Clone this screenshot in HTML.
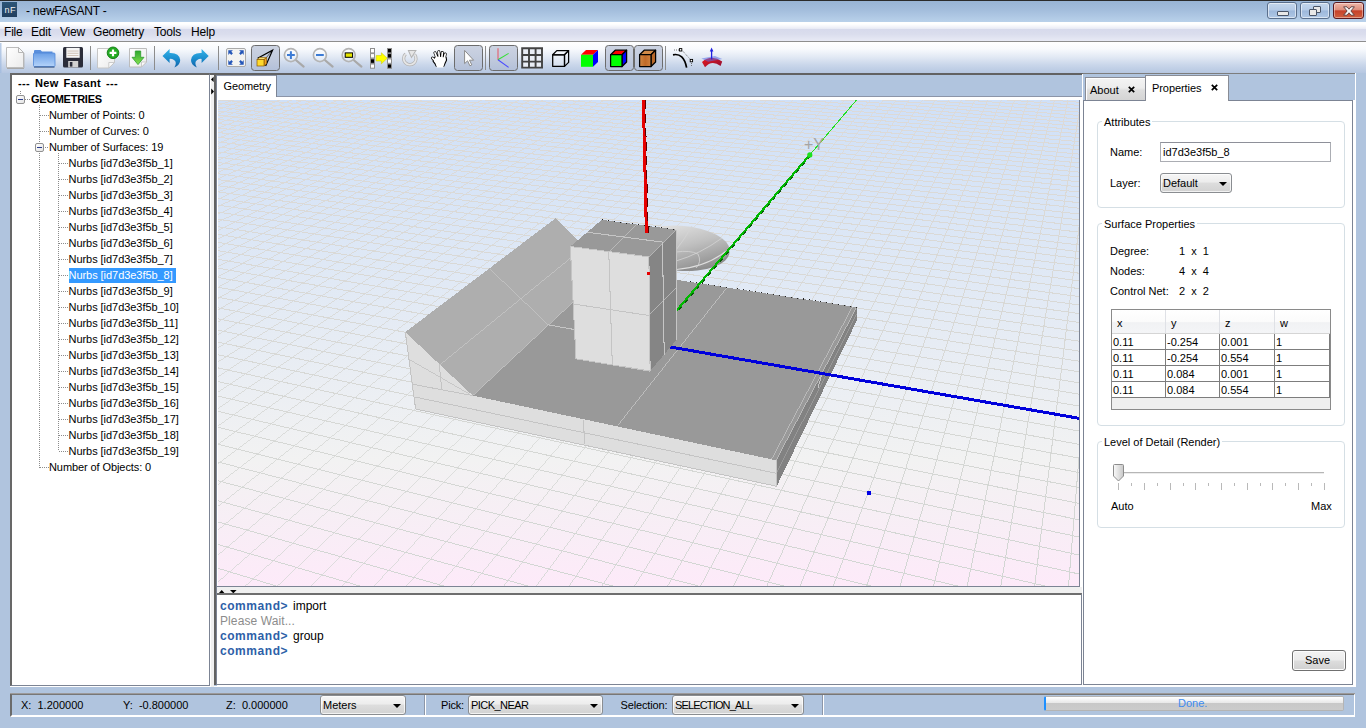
<!DOCTYPE html>
<html><head><meta charset="utf-8"><title>- newFASANT -</title>
<style>
html,body{margin:0;padding:0}
body{width:1366px;height:728px;overflow:hidden;background:#b0c4de;position:relative;font-family:"Liberation Sans",sans-serif;font-size:11px;color:#000}
.a{position:absolute}
.t{position:absolute;white-space:pre;line-height:13px;height:13px;margin-top:1px}
.b{font-weight:bold}
.combo{position:absolute;box-sizing:border-box;border:1px solid #8a8d91;border-radius:3px;background:linear-gradient(#f6f6f6,#ececec 45%,#dddddd 50%,#d2d2d2);box-shadow:inset 0 0 0 1px rgba(255,255,255,.7)}
.combo i{position:absolute;right:4px;top:8px;width:0;height:0;border-left:4px solid transparent;border-right:4px solid transparent;border-top:4px solid #000}
.combo span{position:absolute;left:2px;top:3px;line-height:13px;white-space:pre}
.grp{position:absolute;box-sizing:border-box;border:1px solid #d5dfe5;border-radius:4px}
.grp b{position:absolute;top:-6px;left:4px;background:#fff;padding:0 2px;font-weight:normal;line-height:13px;white-space:pre}
</style></head>
<body>
<!-- title bar -->
<div class="a" style="left:0;top:0;width:1366px;height:22px;background:linear-gradient(#97b3d4,#a3bddc 45%,#b9d1ea 100%)"></div>
<div class="a" style="left:0;top:0;width:1366px;height:1px;background:#2b2b2b"></div>
<div class="a" style="left:2px;top:2px;width:15px;height:15px;background:linear-gradient(#2d5578,#223f5e)"><span class="a" style="left:2.5px;top:3px;font-size:9px;line-height:10px;color:#f2f2f2;letter-spacing:0.4px">nF</span></div>
<span class="t" style="left:26px;top:3px;font-size:12px;line-height:14px;height:14px;letter-spacing:-0.2px">- newFASANT -</span>
<!-- window buttons -->
<div class="a" style="left:1267px;top:2px;width:30px;height:17px;box-sizing:border-box;border:1px solid #5a6f8c;border-radius:3px;background:linear-gradient(#c4d6ec,#b4cae6 48%,#9db8db 52%,#b0c8e6);box-shadow:inset 0 0 0 1px rgba(255,255,255,.55)"><div class="a" style="left:9px;top:8px;width:10px;height:3px;background:#e8e8e8;border:1px solid #4a5568;border-radius:1px"></div></div>
<div class="a" style="left:1300px;top:2px;width:30px;height:17px;box-sizing:border-box;border:1px solid #5a6f8c;border-radius:3px;background:linear-gradient(#c4d6ec,#b4cae6 48%,#9db8db 52%,#b0c8e6);box-shadow:inset 0 0 0 1px rgba(255,255,255,.55)">
<div class="a" style="left:12px;top:3px;width:6px;height:5px;border:1.5px solid #4a5568;background:#e8e8e8;border-radius:1px"></div>
<div class="a" style="left:8px;top:6px;width:6px;height:5px;border:1.5px solid #4a5568;background:#e8e8e8;border-radius:1px"></div></div>
<div class="a" style="left:1333px;top:2px;width:31px;height:17px;box-sizing:border-box;border:1px solid #5b1a20;border-radius:3px;background:linear-gradient(#eeb6a8,#dd8e7c 46%,#c6412a 52%,#d0603f);box-shadow:inset 0 0 0 1px rgba(255,255,255,.4)"><svg class="a" style="left:9px;top:3px" width="12" height="10" viewBox="0 0 12 10"><path d="M0.6 0.8 L4 0.8 L6 3.2 L8 0.8 L11.4 0.8 L7.9 5 L11.4 9.2 L8 9.2 L6 6.8 L4 9.2 L0.6 9.2 L4.1 5 Z" fill="#f6f6f6" stroke="#5a3a3a" stroke-width="0.9"/></svg></div>
<!-- menu bar -->
<div class="a" style="left:0;top:22px;width:1366px;height:19px;background:linear-gradient(#ffffff 0,#ffffff 2px,#f2f3f9 5px,#e7e9f4 7px,#d7daec 7px,#dadded 12px,#e8eaf5 19px)"></div>
<div class="a" style="left:0;top:41px;width:1366px;height:1px;background:#8e8e8e"></div>
<span class="t" style="left:4px;top:24px;font-size:12px;line-height:14px;height:14px;letter-spacing:-0.2px">File</span>
<span class="t" style="left:31px;top:24px;font-size:12px;line-height:14px;height:14px;letter-spacing:-0.2px">Edit</span>
<span class="t" style="left:60px;top:24px;font-size:12px;line-height:14px;height:14px;letter-spacing:-0.2px">View</span>
<span class="t" style="left:93px;top:24px;font-size:12px;line-height:14px;height:14px;letter-spacing:-0.2px">Geometry</span>
<span class="t" style="left:154px;top:24px;font-size:12px;line-height:14px;height:14px;letter-spacing:-0.2px">Tools</span>
<span class="t" style="left:191px;top:24px;font-size:12px;line-height:14px;height:14px;letter-spacing:-0.2px">Help</span>
<!-- toolbar bg -->
<div class="a" style="left:0;top:42px;width:1366px;height:31px;background:linear-gradient(#ffffff 0,#f8fafd 7px,#e2e9f4 15px,#c9d6ea 23px,#b6c7e1 31px)"></div>
<div class="a" style="left:0;top:43px;width:2px;height:30px;background:linear-gradient(90deg,rgba(160,186,222,.9),rgba(160,186,222,.2))"></div>
<!-- main bevel -->
<div class="a" style="left:10px;top:73px;width:1345px;height:1px;background:#676767"></div>
<div class="a" style="left:1355px;top:73px;width:1px;height:614px;background:#fff"></div>
<!-- toolbar icons -->
<svg class="a" style="left:0;top:42px" width="740" height="31" viewBox="0 42 740 31">
<defs>
<linearGradient id="gdoc" x1="0" y1="0" x2="1" y2="1"><stop offset="0" stop-color="#ffffff"/><stop offset="1" stop-color="#ebebeb"/></linearGradient>
<linearGradient id="gfold" x1="0" y1="0" x2="0" y2="1"><stop offset="0" stop-color="#6a9fe6"/><stop offset="1" stop-color="#b4d3fa"/></linearGradient>
<linearGradient id="gblue" x1="0" y1="0" x2="0" y2="1"><stop offset="0" stop-color="#35b4e8"/><stop offset="0.5" stop-color="#1c8fd0"/><stop offset="1" stop-color="#0f62a8"/></linearGradient>
<linearGradient id="ggreen" x1="0" y1="0" x2="0" y2="1"><stop offset="0" stop-color="#2fa82f"/><stop offset="1" stop-color="#86e24e"/></linearGradient>
<linearGradient id="gbtn" x1="0" y1="0" x2="0" y2="1"><stop offset="0" stop-color="#ccd3e2"/><stop offset="0.5" stop-color="#c2cbdd"/><stop offset="1" stop-color="#b3c0d9"/></linearGradient>
<linearGradient id="glens" x1="0" y1="0" x2="0" y2="1"><stop offset="0" stop-color="#ffffff"/><stop offset="1" stop-color="#dfe9f6"/></linearGradient>
<linearGradient id="gwood" x1="0" y1="0" x2="1" y2="0"><stop offset="0" stop-color="#d08845"/><stop offset="0.5" stop-color="#c06a28"/><stop offset="1" stop-color="#cf8240"/></linearGradient>
<linearGradient id="gred" x1="0" y1="0" x2="1" y2="1"><stop offset="0" stop-color="#f01818"/><stop offset="1" stop-color="#8a1038"/></linearGradient>
</defs>
<!-- separators -->
<g fill="#8c8c8c"><rect x="90" y="46" width="1" height="24"/><rect x="154" y="46" width="1" height="24"/><rect x="218" y="46" width="1" height="24"/><rect x="485" y="46" width="1" height="24"/><rect x="665" y="46" width="1" height="24"/></g>
<!-- selected button backgrounds -->
<g fill="url(#gbtn)" stroke="#6c6c6c" stroke-width="1"><rect x="251.5" y="45.5" width="28" height="25" rx="3"/><rect x="454.5" y="45.5" width="28" height="25" rx="3"/><rect x="489.5" y="45.5" width="28" height="25" rx="3"/><rect x="605.5" y="45.5" width="28" height="25" rx="3"/><rect x="634.5" y="45.5" width="28" height="25" rx="3"/></g>
<!-- 1 new -->
<path d="M6.5 47.5 H18.5 L23.5 52.5 V67.5 H6.5 Z" fill="url(#gdoc)" stroke="#bcbcbc"/><path d="M18.5 47.5 V52.5 H23.5 Z" fill="#f8f8f8" stroke="#b0b0b0" stroke-width=".9"/><rect x="7" y="68" width="17" height="1" fill="#a8a8a8"/><rect x="23.6" y="53" width=".8" height="15" fill="#b0b0b0"/>
<!-- 2 open -->
<path d="M34 54 V51 Q34 50 35 50 H40.5 L42 51.5 H52.5 V54 Z" fill="#5a8fdc"/><rect x="33.5" y="53" width="21.5" height="13.5" rx="1" fill="url(#gfold)" stroke="#5088d8" stroke-width=".8"/><rect x="34" y="66.6" width="20.5" height="1" fill="#34527e"/>
<!-- 3 save -->
<rect x="63" y="47" width="20" height="20.6" rx="1.5" fill="#2b2d3a"/><rect x="66.3" y="47.8" width="13.4" height="10" fill="#f6f6f6"/><g fill="#cdbfb2"><rect x="67.5" y="50.6" width="11" height=".9"/><rect x="67.5" y="52.8" width="11" height=".9"/><rect x="67.5" y="55" width="11" height=".9"/></g><rect x="68.2" y="61" width="10" height="6.4" fill="#d2d2d2"/><rect x="69.8" y="62" width="2.6" height="4.6" fill="#2b2d3a"/>
<!-- 4 new+ -->
<path d="M97.5 48.5 H114.5 V62.5 L108.5 68 H97.5 Z" fill="url(#gdoc)" stroke="#c6c6c6"/><path d="M114.5 62.5 H108.8 V68 Z" fill="#fafafa" stroke="#c0c0c0" stroke-width=".8"/>
<circle cx="113" cy="52.8" r="5.8" fill="#22aa22" stroke="#107a10" stroke-width=".9"/><path d="M113 49.4 V56.2 M109.6 52.8 H116.4" stroke="#fff" stroke-width="2.2"/>
<!-- 5 download -->
<path d="M129.5 48.5 H146.5 V62 L141.5 67 H129.5 Z" fill="url(#gdoc)" stroke="#bcbcbc"/><path d="M146.5 62 H141.5 V67 Z" fill="#fafafa" stroke="#c0c0c0" stroke-width=".8"/>
<path d="M135.3 51 H140.7 V57.3 H144 L138 64.6 L132 57.3 H135.3 Z" fill="url(#ggreen)" stroke="#2f9d2f" stroke-width=".8"/>
<!-- 6 undo / 7 redo -->
<path id="undo" d="M162.5 56 L169.6 49 V53 Q179.4 52.6 180.2 60 Q180.4 64.6 174.4 67.6 Q177.4 62.4 174 60 Q172 58.7 169.6 58.9 V63 Z" fill="url(#gblue)"/>
<use href="#undo" transform="translate(371.2 0) scale(-1 1)"/>
<!-- 8 fit -->
<rect x="226.5" y="48.5" width="19" height="18" rx="1.5" fill="#f3f3f1" stroke="#a9a9a9"/>
<g fill="#2456b8"><path d="M228.3 50.3 h4.6 l-1.6 1.4 l1.6 1.6 l-1.6 1.6 l-1.6 -1.6 l-1.4 1.6 Z"/><path d="M243.7 50.3 v4.6 l-1.4 -1.6 l-1.6 1.6 l-1.6 -1.6 l1.6 -1.6 l-1.6 -1.4 Z"/><path d="M228.3 64.7 v-4.6 l1.4 1.6 l1.6 -1.6 l1.6 1.6 l-1.6 1.6 l1.6 1.4 Z"/><path d="M243.7 64.7 h-4.6 l1.6 -1.4 l-1.6 -1.6 l1.6 -1.6 l1.6 1.6 l1.4 -1.6 Z"/></g>
<!-- 9 perspective -->
<path d="M257.6 58.2 L272.6 50.2 L265.6 66" fill="none" stroke="#000" stroke-width="1.2"/><path d="M266.3 57.6 L272.6 50.2" stroke="#000" stroke-width="1" stroke-dasharray="1.5 1.2"/>
<polygon points="257,59.6 259.6,57.6 266.6,57.6 264,59.6" fill="#ffe97a" stroke="#8a5a00" stroke-width=".7"/><polygon points="264,59.6 266.6,57.6 266.6,63.8 264,66" fill="#f2a020" stroke="#8a5a00" stroke-width=".7"/><rect x="257" y="59.6" width="7" height="6.4" fill="#ffd92e" stroke="#8a5a00" stroke-width=".7"/>
<!-- 10-12 zooms -->
<g stroke="#a9a9a9" stroke-width="2.2" stroke-linecap="round"><path d="M295.8 60 L303.6 66.6"/><path d="M324.8 60 L332.6 66.6"/><path d="M353.6 60 L361.4 66.6"/></g>
<g fill="url(#glens)" stroke="#b4b4b4" stroke-width="1.7"><circle cx="290.9" cy="55.1" r="6.5"/><circle cx="319.9" cy="55.1" r="6.5"/><circle cx="348.7" cy="55.1" r="6.5"/></g>
<path d="M290.9 51.2 V59 M287 55.1 H294.8 M316 55.1 H323.8" stroke="#3c7bd4" stroke-width="2"/>
<rect x="345.2" y="52.9" width="7.4" height="4.4" fill="#e6e600" stroke="#000" stroke-width="1"/>
<!-- 13 invert selection -->
<g stroke="#8e8e8e" stroke-width="1"><rect x="370.5" y="48.5" width="4" height="4.4" fill="#fff"/><rect x="370.5" y="53.6" width="4" height="4.4" fill="#fff"/><rect x="370.5" y="58.9" width="4" height="4.4" fill="#000"/><rect x="370.5" y="64" width="4" height="4.2" fill="#fff"/>
<rect x="387.5" y="48.5" width="4" height="4.4" fill="#000"/><rect x="387.5" y="53.6" width="4" height="4.4" fill="#000"/><rect x="387.5" y="58.9" width="4" height="4.4" fill="#fff"/><rect x="387.5" y="64" width="4" height="4.2" fill="#000"/></g>
<path d="M376.2 55.6 H381.4 V52.8 L387.2 58.3 L381.4 63.8 V61 H376.2 Z" fill="#ffff00" stroke="#d0d000" stroke-width=".6"/>
<!-- 14 rotate -->
<path d="M414.6 54.6 A6.2 6.2 0 1 1 405.6 54" fill="none" stroke="#b2b2b2" stroke-width="3.2"/><polygon points="407.6,50 416.8,50 411.4,58.4" fill="#b2b2b2"/>
<path d="M414.6 54.6 A6.2 6.2 0 1 1 405.6 54" fill="none" stroke="#e6e6e6" stroke-width="1.7"/><polygon points="409.2,50.9 415,50.9 411.5,56.4" fill="#e6e6e6"/>
<!-- 15 hand -->
<g stroke="#000" stroke-width="3.1" stroke-linecap="round" fill="none"><path d="M437.2 58 L435 52.9 M439.4 57.5 L438.8 51.8 M441.8 57.8 L442.3 52.5 M444 59 L445.2 54.1 M436.5 61.5 L432.6 58.1"/></g>
<path d="M434.6 58.8 L436 56.5 L445.6 57.5 L446 60 L444.6 63 L443.4 65.9 H436.6 L435.5 63.5 L433.6 61 Z" fill="#fff" stroke="#000" stroke-width="2.2" stroke-linejoin="round"/>
<path d="M434.6 58.8 L436 56.5 L445.6 57.5 L446 60 L444.6 63 L443.2 67.4 H436.9 L435.5 63.5 L433.6 61 Z" fill="#fff"/>
<g stroke="#fff" stroke-width="1.7" stroke-linecap="round" fill="none"><path d="M437.2 58.5 L435 52.9 M439.4 58 L438.8 51.8 M441.8 58.3 L442.3 52.5 M444 59.5 L445.2 54.1 M436.8 62 L432.6 58.1"/></g>
<!-- 16 pointer -->
<path d="M464.6 50.4 V63.6 L467.6 60.8 L469.9 65.8 L471.8 64.9 L469.5 60.2 H473.6 Z" fill="#fff" stroke="#8c8c8c" stroke-width="1"/>
<!-- 17 axes -->
<path d="M498 48.2 V59.8" stroke="#e0707e" stroke-width="1.3"/><path d="M498 59.8 L508.6 53.4" stroke="#34e034" stroke-width="1.1"/><path d="M498 59.8 L508.6 67.4" stroke="#4a4aff" stroke-width="1.1"/>
<!-- 18 grid -->
<rect x="522" y="48" width="20.4" height="20" fill="#e9edf5"/><path d="M522.2 47.3 V68.5 M529 47.3 V68.5 M535.6 47.3 V68.5 M542 47.3 V68.5 M521.2 48.3 H543 M521.2 55 H543 M521.2 61.6 H543 M521.2 67.6 H543" stroke="#434343" stroke-width="1.9"/>
<!-- 19 wire cube -->
<g fill="#fff" fill-opacity=".25" stroke="#000" stroke-width="1.25" stroke-linejoin="round"><polygon points="552.7,54.8 556.8,50.6 568.6,50.6 564.5,54.8"/><polygon points="564.5,54.8 568.6,50.6 568.6,62.4 564.5,66.4"/><rect x="552.7" y="54.8" width="11.8" height="11.6"/></g>
<!-- 20 colour cube -->
<polygon points="581,54.8 586,49.9 598,49.9 593,54.8" fill="#ff0000"/><polygon points="593,54.8 598,49.9 598,61.9 593,66.8" fill="#0000ff"/><rect x="581" y="54.8" width="12" height="12" fill="#00ff00"/>
<!-- 21 colour cube outlined -->
<g stroke="#000" stroke-width="1.25" stroke-linejoin="round"><polygon points="610.6,54.7 615.2,50.2 626.6,50.2 622,54.7" fill="#ff0000"/><polygon points="622,54.7 626.6,50.2 626.6,62 622,66.5" fill="#0000ff"/><rect x="610.6" y="54.7" width="11.4" height="11.8" fill="#00ff00"/></g>
<!-- 22 textured cube -->
<g stroke="#000" stroke-width="1.25" stroke-linejoin="round"><polygon points="639.6,54.7 644.2,50.2 655.6,50.2 651,54.7" fill="#d08a48"/><polygon points="651,54.7 655.6,50.2 655.6,62 651,66.5" fill="#b8682a"/><rect x="639.6" y="54.7" width="11.4" height="11.8" fill="url(#gwood)"/></g>
<!-- 23 curve -->
<path d="M673 54.8 Q683.6 52.6 686.6 67.6" fill="none" stroke="#000" stroke-width="1.7"/><path d="M674 50 H679 M682.5 50.8 L689.6 58.6 M691.5 63 V67" stroke="#555" stroke-width=".8" stroke-dasharray="1 1"/><rect x="679.4" y="48.6" width="2.4" height="2.4" fill="#fff" stroke="#000" stroke-width=".9"/><rect x="690.2" y="59.4" width="2.4" height="2.4" fill="#fff" stroke="#000" stroke-width=".9"/>
<!-- 24 surface -->
<path d="M702 62 Q711.5 54 722.2 61.4 L720.6 66 Q711.8 59.4 705 67.2 Z" fill="url(#gred)"/><polygon points="701.4,58.6 715,56 722.2,59 708.2,61.8" fill="#5a6ee6" fill-opacity=".55"/><path d="M711.6 59.4 V50.6" stroke="#2222e0" stroke-width="1.3"/><polygon points="709.8,51.4 711.6,47.6 713.4,51.4" fill="#2222e0"/>
</svg>
<!-- tree panel -->
<div class="a" style="left:10px;top:73px;width:200px;height:613px;background:#fff;box-sizing:border-box;border-left:2px solid #686868;border-top:2px solid #686868;border-right:1px solid #7c8494;border-bottom:1px solid #7c8494"></div>
<div class="a" style="left:10px;top:686px;width:207px;height:1px;background:#fff"></div>
<div class="a" style="left:210px;top:75px;width:4px;height:612px;background:linear-gradient(90deg,#fff 1px,#f0f0f0 1px)"></div>
<svg class="a" style="left:210px;top:75px" width="4" height="22" viewBox="0 0 4 22"><path d="M3.6 1.8 L3.6 7 L1 4.4 Z" fill="#000"/><path d="M1.2 13.5 L1.2 19.5 L4 16.5 Z" fill="#000"/></svg>
<span class="t b" style="left:18px;top:76px;word-spacing:1.5px;letter-spacing:0.35px">--- New Fasant ---</span>
<div class="a" style="left:20px;top:91px;width:1px;height:4px;background:repeating-linear-gradient(180deg,#8c8c8c 0 1px,transparent 1px 2px)"></div>
<div class="a" style="left:16px;top:95px;width:9px;height:9px;box-sizing:border-box;border:1px solid #919191;border-radius:2px;background:linear-gradient(135deg,#fff,#e4e4e4)"><div class="a" style="left:1px;top:3px;width:5px;height:1px;background:#2a3c8c"></div></div>
<div class="a" style="left:25px;top:99px;width:6px;height:1px;background:repeating-linear-gradient(90deg,#8c8c8c 0 1px,transparent 1px 2px)"></div>
<span class="t b" style="left:31px;top:92px;letter-spacing:-0.25px">GEOMETRIES</span>
<div class="a" style="left:39px;top:105px;width:1px;height:363px;background:repeating-linear-gradient(180deg,#8c8c8c 0 1px,transparent 1px 2px)"></div>
<div class="a" style="left:40px;top:115px;width:9px;height:1px;background:repeating-linear-gradient(90deg,#8c8c8c 0 1px,transparent 1px 2px)"></div>
<span class="t" style="left:49px;top:108px;letter-spacing:-0.09px">Number of Points: 0</span>
<div class="a" style="left:40px;top:131px;width:9px;height:1px;background:repeating-linear-gradient(90deg,#8c8c8c 0 1px,transparent 1px 2px)"></div>
<span class="t" style="left:49px;top:124px;letter-spacing:-0.09px">Number of Curves: 0</span>
<div class="a" style="left:35px;top:143px;width:9px;height:9px;box-sizing:border-box;border:1px solid #919191;border-radius:2px;background:linear-gradient(135deg,#fff,#e4e4e4)"><div class="a" style="left:1px;top:3px;width:5px;height:1px;background:#2a3c8c"></div></div>
<div class="a" style="left:45px;top:147px;width:4px;height:1px;background:repeating-linear-gradient(90deg,#8c8c8c 0 1px,transparent 1px 2px)"></div>
<span class="t" style="left:49px;top:140px;letter-spacing:-0.09px">Number of Surfaces: 19</span>
<div class="a" style="left:40px;top:467px;width:9px;height:1px;background:repeating-linear-gradient(90deg,#8c8c8c 0 1px,transparent 1px 2px)"></div>
<span class="t" style="left:49px;top:460px;letter-spacing:-0.09px">Number of Objects: 0</span>
<div class="a" style="left:58px;top:153px;width:1px;height:298px;background:repeating-linear-gradient(180deg,#8c8c8c 0 1px,transparent 1px 2px)"></div>
<div class="a" style="left:59px;top:163px;width:9px;height:1px;background:repeating-linear-gradient(90deg,#8c8c8c 0 1px,transparent 1px 2px)"></div>
<span class="t" style="left:68.5px;top:156px;letter-spacing:-0.05px">Nurbs [id7d3e3f5b_1]</span>
<div class="a" style="left:59px;top:179px;width:9px;height:1px;background:repeating-linear-gradient(90deg,#8c8c8c 0 1px,transparent 1px 2px)"></div>
<span class="t" style="left:68.5px;top:172px;letter-spacing:-0.05px">Nurbs [id7d3e3f5b_2]</span>
<div class="a" style="left:59px;top:195px;width:9px;height:1px;background:repeating-linear-gradient(90deg,#8c8c8c 0 1px,transparent 1px 2px)"></div>
<span class="t" style="left:68.5px;top:188px;letter-spacing:-0.05px">Nurbs [id7d3e3f5b_3]</span>
<div class="a" style="left:59px;top:211px;width:9px;height:1px;background:repeating-linear-gradient(90deg,#8c8c8c 0 1px,transparent 1px 2px)"></div>
<span class="t" style="left:68.5px;top:204px;letter-spacing:-0.05px">Nurbs [id7d3e3f5b_4]</span>
<div class="a" style="left:59px;top:227px;width:9px;height:1px;background:repeating-linear-gradient(90deg,#8c8c8c 0 1px,transparent 1px 2px)"></div>
<span class="t" style="left:68.5px;top:220px;letter-spacing:-0.05px">Nurbs [id7d3e3f5b_5]</span>
<div class="a" style="left:59px;top:243px;width:9px;height:1px;background:repeating-linear-gradient(90deg,#8c8c8c 0 1px,transparent 1px 2px)"></div>
<span class="t" style="left:68.5px;top:236px;letter-spacing:-0.05px">Nurbs [id7d3e3f5b_6]</span>
<div class="a" style="left:59px;top:259px;width:9px;height:1px;background:repeating-linear-gradient(90deg,#8c8c8c 0 1px,transparent 1px 2px)"></div>
<span class="t" style="left:68.5px;top:252px;letter-spacing:-0.05px">Nurbs [id7d3e3f5b_7]</span>
<div class="a" style="left:59px;top:275px;width:9px;height:1px;background:repeating-linear-gradient(90deg,#8c8c8c 0 1px,transparent 1px 2px)"></div>
<div class="a" style="left:69px;top:268px;width:107px;height:15px;background:#3399ff"></div>
<span class="t" style="left:68.5px;top:268px;color:#fff;letter-spacing:-0.05px">Nurbs [id7d3e3f5b_8]</span>
<div class="a" style="left:59px;top:291px;width:9px;height:1px;background:repeating-linear-gradient(90deg,#8c8c8c 0 1px,transparent 1px 2px)"></div>
<span class="t" style="left:68.5px;top:284px;letter-spacing:-0.05px">Nurbs [id7d3e3f5b_9]</span>
<div class="a" style="left:59px;top:307px;width:9px;height:1px;background:repeating-linear-gradient(90deg,#8c8c8c 0 1px,transparent 1px 2px)"></div>
<span class="t" style="left:68.5px;top:300px;letter-spacing:-0.05px">Nurbs [id7d3e3f5b_10]</span>
<div class="a" style="left:59px;top:323px;width:9px;height:1px;background:repeating-linear-gradient(90deg,#8c8c8c 0 1px,transparent 1px 2px)"></div>
<span class="t" style="left:68.5px;top:316px;letter-spacing:-0.05px">Nurbs [id7d3e3f5b_11]</span>
<div class="a" style="left:59px;top:339px;width:9px;height:1px;background:repeating-linear-gradient(90deg,#8c8c8c 0 1px,transparent 1px 2px)"></div>
<span class="t" style="left:68.5px;top:332px;letter-spacing:-0.05px">Nurbs [id7d3e3f5b_12]</span>
<div class="a" style="left:59px;top:355px;width:9px;height:1px;background:repeating-linear-gradient(90deg,#8c8c8c 0 1px,transparent 1px 2px)"></div>
<span class="t" style="left:68.5px;top:348px;letter-spacing:-0.05px">Nurbs [id7d3e3f5b_13]</span>
<div class="a" style="left:59px;top:371px;width:9px;height:1px;background:repeating-linear-gradient(90deg,#8c8c8c 0 1px,transparent 1px 2px)"></div>
<span class="t" style="left:68.5px;top:364px;letter-spacing:-0.05px">Nurbs [id7d3e3f5b_14]</span>
<div class="a" style="left:59px;top:387px;width:9px;height:1px;background:repeating-linear-gradient(90deg,#8c8c8c 0 1px,transparent 1px 2px)"></div>
<span class="t" style="left:68.5px;top:380px;letter-spacing:-0.05px">Nurbs [id7d3e3f5b_15]</span>
<div class="a" style="left:59px;top:403px;width:9px;height:1px;background:repeating-linear-gradient(90deg,#8c8c8c 0 1px,transparent 1px 2px)"></div>
<span class="t" style="left:68.5px;top:396px;letter-spacing:-0.05px">Nurbs [id7d3e3f5b_16]</span>
<div class="a" style="left:59px;top:419px;width:9px;height:1px;background:repeating-linear-gradient(90deg,#8c8c8c 0 1px,transparent 1px 2px)"></div>
<span class="t" style="left:68.5px;top:412px;letter-spacing:-0.05px">Nurbs [id7d3e3f5b_17]</span>
<div class="a" style="left:59px;top:435px;width:9px;height:1px;background:repeating-linear-gradient(90deg,#8c8c8c 0 1px,transparent 1px 2px)"></div>
<span class="t" style="left:68.5px;top:428px;letter-spacing:-0.05px">Nurbs [id7d3e3f5b_18]</span>
<div class="a" style="left:59px;top:451px;width:9px;height:1px;background:repeating-linear-gradient(90deg,#8c8c8c 0 1px,transparent 1px 2px)"></div>
<span class="t" style="left:68.5px;top:444px;letter-spacing:-0.05px">Nurbs [id7d3e3f5b_19]</span>
<!-- 3d view -->
<div class="a" style="left:214px;top:73px;width:868px;height:612px;box-sizing:border-box;border-left:2px solid #626262;border-top:2px solid #626262"></div>
<div class="a" style="left:216px;top:75px;width:1px;height:610px;background:#7c8494"></div>
<div class="a" style="left:1082px;top:74px;width:1px;height:613px;background:#fff"></div>
<div class="a" style="left:217px;top:75px;width:60px;height:25px;background:#fff;box-sizing:border-box;border-top:1px solid #8c95a8"></div>
<div class="a" style="left:276px;top:75px;width:1px;height:22px;background:#7c8494"></div>
<div class="a" style="left:210px;top:73px;width:6px;height:2px;background:#626262"></div>
<div class="a" style="left:277px;top:96px;width:805px;height:4px;background:#fff;box-sizing:border-box;border-top:1px solid #8c95a8"></div>
<div class="a" style="left:217px;top:96px;width:1px;height:491px;background:#fff"></div>
<div class="a" style="left:1079px;top:100px;width:1px;height:487px;background:#7c8494"></div>
<div class="a" style="left:1080px;top:97px;width:2px;height:490px;background:#fff"></div>
<span class="t" style="left:223.5px;top:79px;letter-spacing:-0.1px">Geometry</span>
<svg class="a" style="left:218px;top:100px" width="861" height="486" viewBox="218 100 861 486">
<defs><linearGradient id="bg" x1="0" y1="0" x2="0" y2="1"><stop offset="0" stop-color="#cfe0f8"/><stop offset="0.74" stop-color="#f2f2f2"/><stop offset="1" stop-color="#fdeaf9"/></linearGradient>
<linearGradient id="gg" gradientUnits="userSpaceOnUse" x1="0" y1="100" x2="0" y2="586"><stop offset="0" stop-color="#dddad7"/><stop offset="1" stop-color="#d2d6d3"/></linearGradient>
<linearGradient id="dish" x1="0.1" y1="0" x2="0.9" y2="1"><stop offset="0" stop-color="#ececec"/><stop offset="0.5" stop-color="#c0c0c0"/><stop offset="1" stop-color="#848484"/></linearGradient></defs>
<rect x="218" y="100" width="861" height="486" fill="url(#bg)"/>
<g stroke="url(#gg)" fill="none" shape-rendering="crispEdges"><path d="M309.5 586.0L805.9 100.0M341.7 586.0L818.8 100.0" stroke-width="0.73"/><path d="M277.4 586.0L793.1 100.0M374.0 586.0L831.6 100.0" stroke-width="0.74"/><path d="M245.4 586.0L780.4 100.0M406.3 586.0L844.5 100.0" stroke-width="0.76"/><path d="M218.0 582.0L767.6 100.0M438.7 586.0L857.4 100.0" stroke-width="0.77"/><path d="M218.0 555.0L754.9 100.0" stroke-width="0.78"/><path d="M218.0 529.9L742.2 100.0M471.2 586.0L870.4 100.0" stroke-width="0.79"/><path d="M218.0 506.4L729.6 100.0M503.8 586.0L883.3 100.0" stroke-width="0.8"/><path d="M218.0 484.4L717.0 100.0" stroke-width="0.81"/><path d="M218.0 463.7L704.4 100.0M536.4 586.0L896.3 100.0" stroke-width="0.82"/><path d="M218.0 425.9L679.2 100.0M218.0 444.3L691.8 100.0" stroke-width="0.83"/><path d="M218.0 408.6L666.7 100.0M569.1 586.0L909.3 100.0" stroke-width="0.84"/><path d="M218.0 376.7L641.8 100.0M218.0 392.2L654.2 100.0M601.9 586.0L922.4 100.0" stroke-width="0.85"/><path d="M218.0 361.9L629.3 100.0" stroke-width="0.86"/><path d="M218.0 334.6L604.5 100.0M218.0 347.9L616.9 100.0M634.7 586.0L935.5 100.0" stroke-width="0.87"/><path d="M218.0 309.9L579.9 100.0M218.0 322.0L592.2 100.0M667.6 586.0L948.6 100.0" stroke-width="0.88"/><path d="M218.0 287.3L555.3 100.0M218.0 298.4L567.6 100.0" stroke-width="0.89"/><path d="M218.0 257.0L518.6 100.0M218.0 266.7L530.8 100.0M218.0 276.8L543.0 100.0M700.6 586.0L961.7 100.0" stroke-width="0.9"/><path d="M218.0 230.3L482.2 100.0M218.0 238.8L494.3 100.0M218.0 247.8L506.4 100.0M733.7 586.0L974.9 100.0" stroke-width="0.91"/><path d="M218.0 206.5L446.0 100.0M218.0 214.2L458.0 100.0M218.0 222.1L470.1 100.0" stroke-width="0.92"/><path d="M218.0 178.7L398.1 100.0M218.0 185.3L410.0 100.0M218.0 192.1L422.0 100.0M218.0 199.2L434.0 100.0M766.8 586.0L988.1 100.0" stroke-width="0.93"/><path d="M218.0 154.4L350.6 100.0M218.0 160.2L362.4 100.0M218.0 166.1L374.3 100.0M218.0 172.3L386.2 100.0M800.0 586.0L1001.3 100.0" stroke-width="0.94"/><path d="M218.0 123.4L280.1 100.0M218.0 128.2L291.8 100.0M218.0 133.1L303.5 100.0M218.0 138.2L315.2 100.0M218.0 143.4L327.0 100.0M218.0 148.8L338.8 100.0" stroke-width="0.95"/><path d="M218.0 101.4L222.0 100.0M218.0 105.6L233.6 100.0M218.0 109.8L245.2 100.0M218.0 114.2L256.8 100.0M218.0 118.7L268.4 100.0M833.3 586.0L1014.6 100.0" stroke-width="0.96"/><path d="M866.7 586.0L1027.9 100.0" stroke-width="0.97"/><path d="M900.1 586.0L1041.2 100.0M218.0 568.3L276.3 586.0M218.0 544.4L359.8 586.0M218.0 521.9L443.7 586.0M218.0 500.8L528.1 586.0" stroke-width="0.98"/><path d="M933.6 586.0L1054.5 100.0M218.0 480.8L613.0 586.0M218.0 462.0L698.4 586.0M218.0 444.2L784.3 586.0M218.0 427.3L870.7 586.0M218.0 411.3L957.6 586.0M218.0 396.1L1045.0 586.0" stroke-width="0.99"/><path d="M967.2 586.0L1067.9 100.0M218.0 381.6L1079.0 574.0M218.0 367.9L1079.0 555.0M218.0 354.7L1079.0 537.0M218.0 342.2L1079.0 519.8M218.0 330.2L1079.0 503.4M218.0 318.8L1079.0 487.6M218.0 307.8L1079.0 472.6M218.0 297.3L1079.0 458.1M218.0 287.2L1079.0 444.3M218.0 277.5L1079.0 431.0M218.0 268.2L1079.0 418.2" stroke-width="1.0"/><path d="M1000.9 586.0L1079.0 114.1M1034.6 586.0L1079.0 227.5M218.0 259.3L1079.0 406.0M218.0 250.7L1079.0 394.2M218.0 242.4L1079.0 382.8M218.0 234.4L1079.0 371.8M218.0 226.7L1079.0 361.2M218.0 219.2L1079.0 351.1M218.0 212.1L1079.0 341.2M218.0 205.1L1079.0 331.7M218.0 198.4L1079.0 322.5M218.0 191.9L1079.0 313.6M218.0 185.7L1079.0 305.0M218.0 179.6L1079.0 296.6M218.0 173.7L1079.0 288.6M218.0 168.0L1079.0 280.8M218.0 162.5L1079.0 273.2M218.0 157.1L1079.0 265.8M218.0 151.9L1079.0 258.6M218.0 146.9L1079.0 251.7M218.0 141.9L1079.0 245.0M218.0 137.2L1079.0 238.4M218.0 132.5L1079.0 232.1M218.0 128.0L1079.0 225.8M218.0 123.6L1079.0 219.8M218.0 119.3L1079.0 214.0M218.0 115.2L1079.0 208.2M218.0 111.1L1079.0 202.7M218.0 107.2L1079.0 197.3M218.0 103.3L1079.0 192.0M222.2 100.0L1079.0 186.8M258.9 100.0L1079.0 181.8" stroke-width="1.01"/><path d="M1068.5 586.0L1079.0 457.2M296.0 100.0L1079.0 176.9M333.2 100.0L1079.0 172.1M370.8 100.0L1079.0 167.4M408.5 100.0L1079.0 162.9M446.6 100.0L1079.0 158.4M484.8 100.0L1079.0 154.1M523.4 100.0L1079.0 149.8M562.2 100.0L1079.0 145.7M601.3 100.0L1079.0 141.6M640.6 100.0L1079.0 137.6M680.3 100.0L1079.0 133.7M720.2 100.0L1079.0 129.9M760.3 100.0L1079.0 126.2M800.8 100.0L1079.0 122.6M841.5 100.0L1079.0 119.0M882.6 100.0L1079.0 115.5M923.9 100.0L1079.0 112.1M965.5 100.0L1079.0 108.7M1007.4 100.0L1079.0 105.4M1049.6 100.0L1079.0 102.2" stroke-width="1.02"/></g>
<g shape-rendering="crispEdges">
<!-- thin green tail -->
<line x1="809.8" y1="154.9" x2="856.6" y2="99.9" stroke="#22e022" stroke-width="1"/>
<!-- dish -->
<g shape-rendering="auto"><ellipse cx="680" cy="249.3" rx="49.5" ry="21.5" transform="rotate(4 680 249.3)" fill="#8e8e8e"/>
<ellipse cx="680" cy="247" rx="49.5" ry="21.2" transform="rotate(4 680 247)" fill="url(#dish)"/>
<path d="M676 269.5 Q706 267 725.5 251.5" stroke="#dedede" stroke-width="1.1" fill="none"/>
<path d="M676 261 Q700 254 722 238 M676 252 Q690 250 698 254 Q702 262 696 268 M692 226 Q684 240 676 250" stroke="#d4d4d4" stroke-width=".8" fill="none"/></g>
<!-- platform -->
<polygon points="472.8,395.6 776.1,460.3 856.7,307.2 608,269.5" fill="#999999"/>
<polygon points="776.1,460.3 856.7,307.2 856.7,320.8 776.7,486.3" fill="#828282"/>
<polygon points="405.3,332.1 472.8,395.6 776.1,460.3 776.7,486.3 415.6,409" fill="#dedede"/>
<!-- ramp slope -->
<polygon points="405.3,332.1 555.7,218.1 608,269.5 472.8,395.6" fill="#aeaeae"/>
<!-- subdivision lines -->
<g stroke="#c6c6c6" stroke-width="1" fill="none">
<path d="M618.1 425.0L726.9 287.6" stroke-width="0.8"/>
<path d="M489.8 268.9L548.4 324.9" stroke-width="0.74"/><path d="M548.4 324.9L576.0 329.8" stroke-width="1.0"/>
<path d="M439.9 364.8L571.4 257.4" stroke-width="0.79"/>
<path d="M472.8 395.6L608.0 269.5" stroke-width="0.75"/>
<path d="M776.1 460.3L856.7 307.2" stroke-width="0.9" stroke="#bdbdbd"/><path d="M771.5 459.4L852.5 306.6" stroke-width="0.9" stroke="#bdbdbd"/><path d="M776.4 473.3L856.7 314.0" stroke-width="0.91" stroke="#9a9a9a"/>
<path d="M822.0 373.0L818.0 388.0" stroke-width="0.99"/>
</g>
<g stroke="#c4c4c4" stroke-width="1" fill="none">
<path d="M439.2 363.9L441.7 389.3" stroke-width="1.02"/>
<path d="M408.7 359.1L469.8 394.3" stroke-width="0.88"/>
<path d="M412.8 384.3L472.8 395.6" stroke-width="1.0"/>
<path d="M414.5 396.9L776.1 473.3" stroke-width="1.0"/>
<path d="M583.6 420.3L584.5 444.4" stroke-width="1.02"/>
<path d="M405.3 332.1L415.6 409.0" stroke-width="1.01"/><path d="M415.6 409.0L776.7 486.3" stroke-width="1.0"/><path d="M776.7 486.3L776.1 460.3" stroke-width="1.02"/>
</g>
<!-- back-edge dots -->
<path d="M690 281.5 L856.7 307.2" stroke="#222" stroke-width="1" stroke-dasharray="1 5" fill="none"/>
<!-- green axis thick -->
<line x1="648.7" y1="343.2" x2="809.8" y2="154.9" stroke="#00b800" stroke-width="2.2"/>
<line x1="649.7" y1="344" x2="810.8" y2="155.7" stroke="#0a5a0a" stroke-width="1" stroke-dasharray="4 5"/>
<!-- blue axis -->
<line x1="648.7" y1="343.2" x2="1079" y2="418.3" stroke="#0000dc" stroke-width="3"/>
<!-- box -->
<polygon points="601.9,219.8 676.1,229.7 648.9,256.9 570.3,246.5" fill="#999999"/>
<polygon points="570.3,246.5 648.9,256.9 650.1,371.1 576,358.8" fill="#dedede"/>
<polygon points="648.9,256.9 676.1,229.7 676.6,339.7 650.1,371.1" fill="#858585"/>
<g stroke="#c4c4c4" stroke-width="1" fill="none">
<path d="M608.8 252.0L612.3 364.5" stroke-width="1.02"/><path d="M572.7 303.9L648.9 315.5" stroke-width="1.01"/>
<path d="M570.3 246.5L576.0 358.8" stroke-width="1.02"/><path d="M576.0 358.8L650.1 371.1" stroke-width="1.01"/>
</g>
<g stroke="#c6c6c6" stroke-width="1" fill="none">
<path d="M662.5 242.1L664.2 354.6" stroke-width="1.02"/><path d="M648.9 315.5L676.1 287.8" stroke-width="0.73"/>
<path d="M587.1 232.2L662.5 242.1" stroke-width="1.01"/><path d="M608.8 252.0L636.5 224.8" stroke-width="0.73"/>
<path d="M648.9 256.9L650.1 371.1" stroke-width="1.02"/><path d="M648.9 256.9L676.1 229.7" stroke-width="0.72"/><path d="M676.1 229.7L676.6 339.7" stroke-width="1.02"/>
<path d="M570.3 246.5L648.9 256.9" stroke-width="1.01"/>
</g>
<path d="M601.9 219.8 L676.1 229.7" stroke="#222" stroke-width="1" stroke-dasharray="1 5" fill="none"/>
<!-- red axis -->
<line x1="643.4" y1="100" x2="646.4" y2="233.4" stroke="#e60000" stroke-width="3"/>
<line x1="645.2" y1="100" x2="648.2" y2="233.4" stroke="#5a0000" stroke-width="1" stroke-dasharray="9 5"/>
<!-- markers -->
<rect x="867" y="491" width="4" height="4" fill="#0000e6"/>
<rect x="646.5" y="272" width="3" height="3" fill="#e60000"/>
<circle cx="809.8" cy="154.9" r="2.6" fill="#1ee01e" shape-rendering="auto"/>
</g>
<text x="804" y="150" font-family="Liberation Sans, sans-serif" font-size="16" fill="#a4a4a4">+Y</text>

</svg>
<!-- h splitter + console -->
<div class="a" style="left:217px;top:586px;width:863px;height:1px;background:#7c8494"></div>
<div class="a" style="left:217px;top:587px;width:865px;height:6px;background:#f0f0f0"></div>
<svg class="a" style="left:218px;top:587px" width="22" height="6" viewBox="0 0 22 6"><path d="M1 6 L3.7 3 L6.4 6 Z" fill="#000"/><path d="M12 3 H18.6 L15.3 6.3 Z" fill="#000"/></svg>
<div class="a" style="left:217px;top:593px;width:865px;height:92px;background:#fff;box-sizing:border-box;border-top:2px solid #6e6e6e;border-right:1px solid #7c8494;border-bottom:1px solid #7c8494"></div>
<div class="a" style="left:217px;top:685px;width:866px;height:2px;background:#fff"></div>
<span class="t b" style="left:220px;top:598px;font-size:12px;line-height:15px;height:15px;color:#2e5fa8;letter-spacing:0.55px">command&gt;</span>
<span class="t" style="left:293px;top:598px;font-size:12px;line-height:15px;height:15px">import</span>
<span class="t" style="left:220px;top:613px;font-size:12px;line-height:15px;height:15px;color:#8c8c8c;letter-spacing:0.1px">Please Wait...</span>
<span class="t b" style="left:220px;top:628px;font-size:12px;line-height:15px;height:15px;color:#2e5fa8;letter-spacing:0.55px">command&gt;</span>
<span class="t" style="left:293px;top:628px;font-size:12px;line-height:15px;height:15px">group</span>
<span class="t b" style="left:220px;top:643px;font-size:12px;line-height:15px;height:15px;color:#2e5fa8;letter-spacing:0.55px">command&gt;</span>
<!-- right panel -->
<div class="a" style="left:1083px;top:73px;width:272px;height:1px;background:#7d7d7d"></div>
<div class="a" style="left:1083px;top:100px;width:270px;height:585px;background:#fff;box-sizing:border-box;border:1px solid #7c8494"></div>
<div class="a" style="left:1083px;top:685px;width:272px;height:2px;background:#fff"></div>
<div class="a" style="left:1353px;top:100px;width:2px;height:587px;background:#fff"></div>
<div class="a" style="left:1085px;top:77px;width:61px;height:23px;box-sizing:border-box;border:1px solid #898c95;border-bottom:none;background:linear-gradient(#f4f4f4,#ececec 45%,#dedede 55%,#d4d4d4);box-shadow:inset 1px 1px 0 #fff"></div>
<span class="t" style="left:1090px;top:83px;letter-spacing:0px">About</span>
<svg class="a" style="left:1128px;top:86px" width="7" height="7" viewBox="0 0 7 7"><path d="M0.8 0.8 L6.2 6.2 M6.2 0.8 L0.8 6.2" stroke="#000" stroke-width="1.7"/></svg>
<div class="a" style="left:1145px;top:75px;width:84px;height:26px;box-sizing:border-box;border:1px solid #898c95;border-bottom:none;background:#fff"></div>
<span class="t" style="left:1152px;top:81px;letter-spacing:-0.08px">Properties</span>
<svg class="a" style="left:1211px;top:84px" width="7" height="7" viewBox="0 0 7 7"><path d="M0.8 0.8 L6.2 6.2 M6.2 0.8 L0.8 6.2" stroke="#000" stroke-width="1.7"/></svg>
<div class="grp" style="left:1097px;top:121px;width:248px;height:87px"><b>Attributes</b></div>
<span class="t" style="left:1110px;top:145px">Name:</span>
<div class="a" style="left:1160px;top:142px;width:171px;height:20px;box-sizing:border-box;border:1px solid #abadb3;border-top-color:#8e9099;background:#fff"><span class="t" style="left:2px;top:2px">id7d3e3f5b_8</span></div>
<span class="t" style="left:1110px;top:176px">Layer:</span>
<div class="combo" style="left:1160px;top:173px;width:72px;height:20px"><span>Default</span><i></i></div>
<div class="grp" style="left:1097px;top:223px;width:248px;height:203px"><b>Surface Properties</b></div>
<span class="t" style="left:1110px;top:244px">Degree:</span>
<span class="t" style="left:1179px;top:244px">1  x  1</span>
<span class="t" style="left:1110px;top:264px">Nodes:</span>
<span class="t" style="left:1179px;top:264px">4  x  4</span>
<span class="t" style="left:1110px;top:284px">Control Net:</span>
<span class="t" style="left:1179px;top:284px">2  x  2</span>
<div class="a" style="left:1111px;top:309px;width:220px;height:101px;box-sizing:border-box;border:1px solid #8a8a8a;background:#efefef"></div>
<div class="a" style="left:1112px;top:310px;width:218px;height:23px;background:linear-gradient(#ffffff,#fbfbfb 50%,#f1f2f4 55%,#f4f5f7)"></div>
<span class="t" style="left:1117px;top:316px">x</span>
<span class="t" style="left:1171px;top:316px">y</span>
<div class="a" style="left:1165px;top:310px;width:1px;height:23px;background:#dfe1e6"></div>
<span class="t" style="left:1225px;top:316px">z</span>
<div class="a" style="left:1219px;top:310px;width:1px;height:23px;background:#dfe1e6"></div>
<span class="t" style="left:1280px;top:316px">w</span>
<div class="a" style="left:1274px;top:310px;width:1px;height:23px;background:#dfe1e6"></div>
<div class="a" style="left:1112px;top:333px;width:218px;height:1px;background:#d5d5d5"></div>
<div class="a" style="left:1112px;top:334px;width:218px;height:16px;background:#fff"></div>
<div class="a" style="left:1112px;top:349px;width:218px;height:1px;background:#7d7d7d"></div>
<span class="t" style="left:1113px;top:335px">0.11</span>
<span class="t" style="left:1167px;top:335px">-0.254</span>
<span class="t" style="left:1221px;top:335px">0.001</span>
<span class="t" style="left:1276px;top:335px">1</span>
<div class="a" style="left:1112px;top:350px;width:218px;height:16px;background:#fff"></div>
<div class="a" style="left:1112px;top:365px;width:218px;height:1px;background:#7d7d7d"></div>
<span class="t" style="left:1113px;top:351px">0.11</span>
<span class="t" style="left:1167px;top:351px">-0.254</span>
<span class="t" style="left:1221px;top:351px">0.554</span>
<span class="t" style="left:1276px;top:351px">1</span>
<div class="a" style="left:1112px;top:366px;width:218px;height:16px;background:#fff"></div>
<div class="a" style="left:1112px;top:381px;width:218px;height:1px;background:#7d7d7d"></div>
<span class="t" style="left:1113px;top:367px">0.11</span>
<span class="t" style="left:1167px;top:367px">0.084</span>
<span class="t" style="left:1221px;top:367px">0.001</span>
<span class="t" style="left:1276px;top:367px">1</span>
<div class="a" style="left:1112px;top:382px;width:218px;height:16px;background:#fff"></div>
<div class="a" style="left:1112px;top:397px;width:218px;height:1px;background:#7d7d7d"></div>
<span class="t" style="left:1113px;top:383px">0.11</span>
<span class="t" style="left:1167px;top:383px">0.084</span>
<span class="t" style="left:1221px;top:383px">0.554</span>
<span class="t" style="left:1276px;top:383px">1</span>
<div class="a" style="left:1165px;top:334px;width:1px;height:64px;background:#7d7d7d"></div>
<div class="a" style="left:1219px;top:334px;width:1px;height:64px;background:#7d7d7d"></div>
<div class="a" style="left:1274px;top:334px;width:1px;height:64px;background:#7d7d7d"></div>
<div class="a" style="left:1329px;top:334px;width:1px;height:64px;background:#7d7d7d"></div>
<div class="grp" style="left:1097px;top:441px;width:248px;height:87px"><b>Level of Detail (Render)</b></div>
<div class="a" style="left:1118px;top:472px;width:206px;height:1px;background:#b6b6b6"></div>
<div class="a" style="left:1118px;top:473px;width:206px;height:1px;background:#ececec"></div>
<div class="a" style="left:1118px;top:483px;width:1px;height:7px;background:#b9b9b9"></div>
<div class="a" style="left:1131px;top:483px;width:1px;height:3px;background:#b9b9b9"></div>
<div class="a" style="left:1144px;top:483px;width:1px;height:7px;background:#b9b9b9"></div>
<div class="a" style="left:1157px;top:483px;width:1px;height:3px;background:#b9b9b9"></div>
<div class="a" style="left:1170px;top:483px;width:1px;height:7px;background:#b9b9b9"></div>
<div class="a" style="left:1183px;top:483px;width:1px;height:3px;background:#b9b9b9"></div>
<div class="a" style="left:1195px;top:483px;width:1px;height:7px;background:#b9b9b9"></div>
<div class="a" style="left:1208px;top:483px;width:1px;height:3px;background:#b9b9b9"></div>
<div class="a" style="left:1221px;top:483px;width:1px;height:7px;background:#b9b9b9"></div>
<div class="a" style="left:1234px;top:483px;width:1px;height:3px;background:#b9b9b9"></div>
<div class="a" style="left:1247px;top:483px;width:1px;height:7px;background:#b9b9b9"></div>
<div class="a" style="left:1260px;top:483px;width:1px;height:3px;background:#b9b9b9"></div>
<div class="a" style="left:1272px;top:483px;width:1px;height:7px;background:#b9b9b9"></div>
<div class="a" style="left:1285px;top:483px;width:1px;height:3px;background:#b9b9b9"></div>
<div class="a" style="left:1298px;top:483px;width:1px;height:7px;background:#b9b9b9"></div>
<div class="a" style="left:1311px;top:483px;width:1px;height:3px;background:#b9b9b9"></div>
<div class="a" style="left:1324px;top:483px;width:1px;height:7px;background:#b9b9b9"></div>
<svg class="a" style="left:1113px;top:464px" width="11" height="18" viewBox="0 0 11 18"><defs><linearGradient id="th" x1="0" x2="1"><stop offset="0" stop-color="#fafafa"/><stop offset="1" stop-color="#c8c8c8"/></linearGradient></defs><path d="M1.5 0.5 H9.5 Q10.5 0.5 10.5 1.5 V12 L5.5 17 L0.5 12 V1.5 Q0.5 0.5 1.5 0.5 Z" fill="url(#th)" stroke="#8c8c8c"/></svg>
<span class="t" style="left:1111px;top:499px">Auto</span>
<span class="t" style="left:1311px;top:499px">Max</span>
<div class="a" style="left:1292px;top:650px;width:54px;height:21px;box-sizing:border-box;border:1px solid #707070;border-radius:3px;background:linear-gradient(#f3f3f3,#ebebeb 48%,#dddddd 52%,#cfcfcf);box-shadow:inset 0 0 0 1px #fcfcfc"><span class="t" style="left:12px;top:2px">Save</span></div>
<!-- status bar -->
<div class="a" style="left:10px;top:693px;width:1345px;height:24px;box-sizing:border-box;border-top:2px solid #6b6b6b;border-left:2px solid #6b6b6b;border-bottom:2px solid #fff;border-right:1px solid #fff;border-top-color:#777"></div>
<div class="a" style="left:10px;top:693px;width:1345px;height:1px;background:#9c9a9a"></div>
<span class="t" style="left:21px;top:698px">X:  1.200000</span>
<span class="t" style="left:123px;top:698px">Y:  -0.800000</span>
<span class="t" style="left:226px;top:698px">Z:  0.000000</span>
<div class="combo" style="left:320px;top:695px;width:86px;height:20px"><span>Meters</span><i></i></div>
<div class="a" style="left:424px;top:695px;width:1px;height:20px;background:#8c96a8"></div><div class="a" style="left:425px;top:695px;width:1px;height:20px;background:#fff"></div>
<span class="t" style="left:441px;top:698px;letter-spacing:-0.2px">Pick:</span>
<div class="combo" style="left:468px;top:695px;width:135px;height:20px"><span style="letter-spacing:-0.55px">PICK_NEAR</span><i></i></div>
<span class="t" style="left:620.5px;top:698px;letter-spacing:-0.15px">Selection:</span>
<div class="combo" style="left:672px;top:695px;width:132px;height:20px"><span style="letter-spacing:-0.85px">SELECTION_ALL</span><i></i></div>
<div class="a" style="left:822px;top:695px;width:1px;height:20px;background:#8c96a8"></div><div class="a" style="left:823px;top:695px;width:1px;height:20px;background:#fff"></div>
<div class="a" style="left:1044px;top:696px;width:300px;height:15px;box-sizing:border-box;border:1px solid #b4b4b4;border-left:2px solid #1e90ff;border-radius:2px;background:linear-gradient(#ffffff,#e8e8e8 45%,#c8c8c8 50%,#cbcbcb 100%)"></div>
<span class="t" style="left:1178px;top:696px;color:#3d8bf0">Done.</span>

</body></html>
